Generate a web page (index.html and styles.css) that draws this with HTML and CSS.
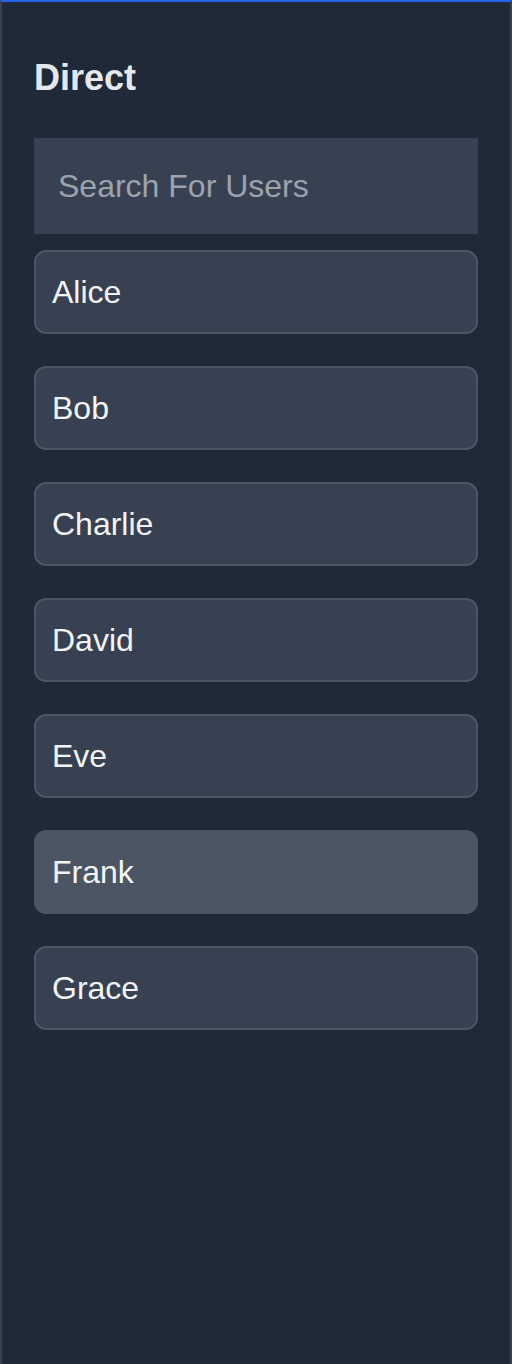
FILE: index.html
```html
<!DOCTYPE html>
<html lang="en">
<head>
<meta charset="utf-8">
<title>Direct</title>
<link rel="stylesheet" href="styles.css">
</head>
<body>
<aside class="sidebar">
  <h2 class="title">Direct</h2>
  <input class="search" type="text" placeholder="Search For Users">
  <ul class="users">
    <li class="user">Alice</li>
    <li class="user">Bob</li>
    <li class="user">Charlie</li>
    <li class="user">David</li>
    <li class="user">Eve</li>
    <li class="user user-active">Frank</li>
    <li class="user">Grace</li>
  </ul>
</aside>
</body>
</html>
```
FILE: styles.css
```css
html, body {
  margin: 0;
  padding: 0;
  background: #1f2937;
}
body {
  font-family: "Liberation Sans", Arial, sans-serif;
}
.sidebar {
  box-sizing: border-box;
  width: 512px;
  height: 1364px;
  background: #1f2937;
  border-top: 2px solid #2563eb;
  border-left: 2px solid #374151;
  border-right: 2px solid #374151;
  padding: 56px 32px 0;
  display: flex;
  flex-direction: column;
}
.title {
  margin: 0 0 40px;
  font-size: 36px;
  line-height: 40px;
  font-weight: 700;
  color: #e5e7eb;
}
.search {
  box-sizing: border-box;
  width: 100%;
  height: 96px;
  margin: 0 0 16px;
  padding: 0 24px;
  border: none;
  outline: none;
  background: #374151;
  color: #f3f4f6;
  font-family: "Liberation Sans", Arial, sans-serif;
  font-size: 32px;
}
.search::placeholder {
  color: #9ca3af;
}
.users {
  list-style: none;
  margin: 0;
  padding: 0;
  display: flex;
  flex-direction: column;
  gap: 32px;
}
.user {
  box-sizing: border-box;
  height: 84px;
  display: flex;
  align-items: center;
  padding: 0 16px;
  background: #374151;
  border: 2px solid #4b5563;
  border-radius: 12px;
  color: #f3f4f6;
  font-size: 32px;
}
.user-active {
  background: #4b5563;
  border-color: #4b5563;
}
```
